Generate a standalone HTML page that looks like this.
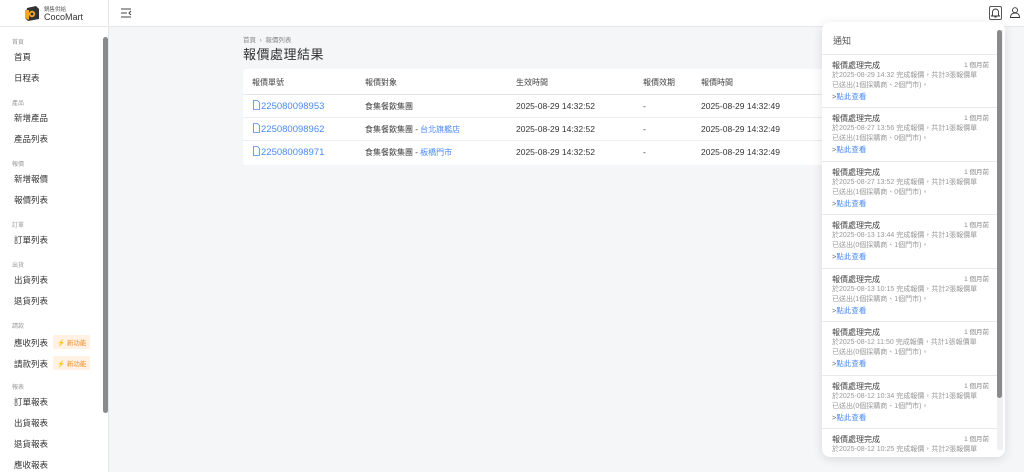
<!DOCTYPE html>
<html><head><meta charset="utf-8"><style>
*{box-sizing:border-box;margin:0;padding:0}
body{width:1024px;height:472px;overflow:hidden;background:#f5f6f8;font-family:"Liberation Sans","Noto Sans CJK TC",sans-serif;color:#333;position:relative}
.side{position:absolute;left:0;top:0;width:109px;height:472px;background:#fff;border-right:1px solid #e6e6e6}
.logo{height:27px;border-bottom:1px solid #e8e8e8;position:relative}
.sb{position:absolute;left:103px;top:37px;width:5px;height:376px;background:#8a8a8a;border-radius:3px}
.g{position:absolute;left:12px;font-size:6px;color:#999}
.it{position:absolute;left:14px;font-size:8.5px;color:#333}
.badge{display:inline-block;margin-left:5px;background:#fff1e3;color:#f08a24;font-size:6.5px;padding:2px 4px;border-radius:2px;vertical-align:1px}
.top{position:absolute;left:109px;top:0;right:0;height:27px;background:#fff;border-bottom:1px solid #e8e8e8}
.card{position:absolute;left:243px;top:69px;width:590px;height:96px;background:#fff;border-radius:3px}
.row{position:absolute;left:0;width:100%;border-bottom:1px solid #eee;font-size:8.5px}
.row span{position:absolute}
.hd{color:#444;font-size:8px}
.lk{color:#4a8af4}
.num{font-size:9.5px}
.num svg{vertical-align:-1px;margin-right:1px}
.np{position:absolute;left:822px;top:22px;width:183px;height:435px;background:#fff;border-radius:8px;box-shadow:0 2px 10px rgba(0,0,0,.12);overflow:hidden}
.ni{position:absolute;left:0;width:175px;height:54px;border-top:1px solid #e8e8e8}
.ni .t{position:absolute;left:10px;top:5px;font-size:8px;color:#444}
.ni .a{position:absolute;right:8px;top:4px;font-size:6.5px;color:#888}
.ni .d{position:absolute;left:10px;top:16px;font-size:7px;color:#999;line-height:9.5px;width:158px}
.ni .l{position:absolute;left:10px;top:36px;font-size:7.5px;color:#4a8af4}
</style></head><body>
<div class="side">
 <div class="logo">
  <svg style="position:absolute;left:24px;top:6px" width="16" height="15" viewBox="0 0 16 15"><path d="M3 2 L12 0 L15 3 L15 13 L4 15 L1 12 Z" fill="#333"/><path d="M1 4 L5 4 L5 14 L1 12Z" fill="#f5a623"/><circle cx="8" cy="8" r="3.2" fill="#f5a623"/><circle cx="8" cy="8" r="1.4" fill="#333"/></svg>
  <div style="position:absolute;left:44px;top:5px;font-size:5.5px;color:#555">鍋售供給</div>
  <div style="position:absolute;left:44px;top:12px;font-size:9px;color:#333">CocoMart</div>
 </div>
 <div class="sb"></div>
 <div class="g" style="top:37px">首頁</div>
 <div class="it" style="top:51px">首頁</div>
 <div class="it" style="top:72px">日程表</div>
 <div class="g" style="top:98px">產品</div>
 <div class="it" style="top:112px">新增產品</div>
 <div class="it" style="top:133px">產品列表</div>
 <div class="g" style="top:159px">報價</div>
 <div class="it" style="top:173px">新增報價</div>
 <div class="it" style="top:194px">報價列表</div>
 <div class="g" style="top:220px">訂單</div>
 <div class="it" style="top:234px">訂單列表</div>
 <div class="g" style="top:260px">出貨</div>
 <div class="it" style="top:274px">出貨列表</div>
 <div class="it" style="top:295px">退貨列表</div>
 <div class="g" style="top:321px">請款</div>
 <div class="it" style="top:335px">應收列表<span class="badge">⚡ 新功能</span></div>
 <div class="it" style="top:356px">請款列表<span class="badge">⚡ 新功能</span></div>
 <div class="g" style="top:382px">報表</div>
 <div class="it" style="top:396px">訂單報表</div>
 <div class="it" style="top:417px">出貨報表</div>
 <div class="it" style="top:438px">退貨報表</div>
 <div class="it" style="top:459px">應收報表</div>
</div>
<div class="top">
 <svg style="position:absolute;left:12px;top:8px" width="11" height="10" viewBox="0 0 11 10" fill="none" stroke="#444" stroke-width="1"><path d="M0 1H10M0 5H6M0 9H10M10 3L8 5L10 7"/></svg>
 <div style="position:absolute;left:880px;top:6px;width:13px;height:14px;border:1px solid #555;border-radius:2px"></div>
 <svg style="position:absolute;left:882px;top:8px" width="9" height="10" viewBox="0 0 9 10" fill="none" stroke="#333" stroke-width="0.9"><path d="M1.5 7V4a3 3 0 0 1 6 0v3l1 1H0.5Z M3.5 9h2"/></svg>
 <svg style="position:absolute;left:901px;top:7px" width="10" height="11" viewBox="0 0 10 11" fill="none" stroke="#333" stroke-width="0.9"><circle cx="5" cy="3.2" r="2.5"/><path d="M0.5 10.5c0-3 2-4.5 4.5-4.5s4.5 1.5 4.5 4.5Z"/></svg>
</div>
<div style="position:absolute;left:243px;top:34px;font-size:6.5px;color:#888">首頁 &nbsp;›&nbsp; 報價列表</div>
<div style="position:absolute;left:243px;top:44px;font-size:13px;color:#333;letter-spacing:0.5px">報價處理結果</div>
<div class="card">
 <div class="row hd" style="top:0;height:26px;border-bottom:1px solid #e4e6ea"><span style="left:9px;top:8px">報價單號</span><span style="left:122px;top:8px">報價對象</span><span style="left:273px;top:8px">生效時間</span><span style="left:400px;top:8px">報價效期</span><span style="left:458px;top:8px">報價時間</span></div>
 <div class="row" style="top:26px;height:23px"><span class="lk num" style="left:10px;top:5px"><svg width="7" height="10" viewBox="0 0 7 10" fill="none" stroke="#4a8af4" stroke-width="0.8"><path d="M0.5 0.5H4.5L6.5 2.5V9.5H0.5Z"/></svg>225080098953</span><span style="left:122px;top:6px;font-size:8px">食集餐飲集團</span><span style="left:273px;top:6px">2025-08-29 14:32:52</span><span style="left:400px;top:6px">-</span><span style="left:458px;top:6px">2025-08-29 14:32:49</span></div>
 <div class="row" style="top:49px;height:23px"><span class="lk num" style="left:10px;top:5px"><svg width="7" height="10" viewBox="0 0 7 10" fill="none" stroke="#4a8af4" stroke-width="0.8"><path d="M0.5 0.5H4.5L6.5 2.5V9.5H0.5Z"/></svg>225080098962</span><span style="left:122px;top:6px;font-size:8px">食集餐飲集團 - <b class="lk" style="font-weight:normal">台北旗艦店</b></span><span style="left:273px;top:6px">2025-08-29 14:32:52</span><span style="left:400px;top:6px">-</span><span style="left:458px;top:6px">2025-08-29 14:32:49</span></div>
 <div class="row" style="top:72px;height:23px;border:none"><span class="lk num" style="left:10px;top:5px"><svg width="7" height="10" viewBox="0 0 7 10" fill="none" stroke="#4a8af4" stroke-width="0.8"><path d="M0.5 0.5H4.5L6.5 2.5V9.5H0.5Z"/></svg>225080098971</span><span style="left:122px;top:6px;font-size:8px">食集餐飲集團 - <b class="lk" style="font-weight:normal">板橋門市</b></span><span style="left:273px;top:6px">2025-08-29 14:32:52</span><span style="left:400px;top:6px">-</span><span style="left:458px;top:6px">2025-08-29 14:32:49</span></div>
</div>
<div class="np">
 <div style="position:absolute;left:11px;top:12px;font-size:9px;color:#555">通知</div>
 <div style="position:absolute;left:175px;top:8px;width:6px;height:420px;background:#f0f0f0"></div>
 <div style="position:absolute;left:175px;top:8px;width:5px;height:368px;background:#8a8a8a;border-radius:3px"></div>
 <div class="ni" style="top:32px"><div class="t">報價處理完成</div><div class="a">1 個月前</div><div class="d">於2025-08-29 14:32 完成報價，共計3張報價單<br>已送出(1個採購商、2個門市)。</div><div class="l"><span style="color:#666">&gt;</span>點此查看</div></div>
 <div class="ni" style="top:85px"><div class="t">報價處理完成</div><div class="a">1 個月前</div><div class="d">於2025-08-27 13:56 完成報價，共計1張報價單<br>已送出(1個採購商、0個門市)。</div><div class="l"><span style="color:#666">&gt;</span>點此查看</div></div>
 <div class="ni" style="top:139px"><div class="t">報價處理完成</div><div class="a">1 個月前</div><div class="d">於2025-08-27 13:52 完成報價，共計1張報價單<br>已送出(1個採購商、0個門市)。</div><div class="l"><span style="color:#666">&gt;</span>點此查看</div></div>
 <div class="ni" style="top:192px"><div class="t">報價處理完成</div><div class="a">1 個月前</div><div class="d">於2025-08-13 13:44 完成報價，共計1張報價單<br>已送出(0個採購商、1個門市)。</div><div class="l"><span style="color:#666">&gt;</span>點此查看</div></div>
 <div class="ni" style="top:246px"><div class="t">報價處理完成</div><div class="a">1 個月前</div><div class="d">於2025-08-13 10:15 完成報價，共計2張報價單<br>已送出(1個採購商、1個門市)。</div><div class="l"><span style="color:#666">&gt;</span>點此查看</div></div>
 <div class="ni" style="top:299px"><div class="t">報價處理完成</div><div class="a">1 個月前</div><div class="d">於2025-08-12 11:50 完成報價，共計1張報價單<br>已送出(0個採購商、1個門市)。</div><div class="l"><span style="color:#666">&gt;</span>點此查看</div></div>
 <div class="ni" style="top:353px"><div class="t">報價處理完成</div><div class="a">1 個月前</div><div class="d">於2025-08-12 10:34 完成報價，共計1張報價單<br>已送出(0個採購商、1個門市)。</div><div class="l"><span style="color:#666">&gt;</span>點此查看</div></div>
 <div class="ni" style="top:406px"><div class="t">報價處理完成</div><div class="a">1 個月前</div><div class="d">於2025-08-12 10:25 完成報價，共計2張報價單</div></div>
</div>
</body></html>
